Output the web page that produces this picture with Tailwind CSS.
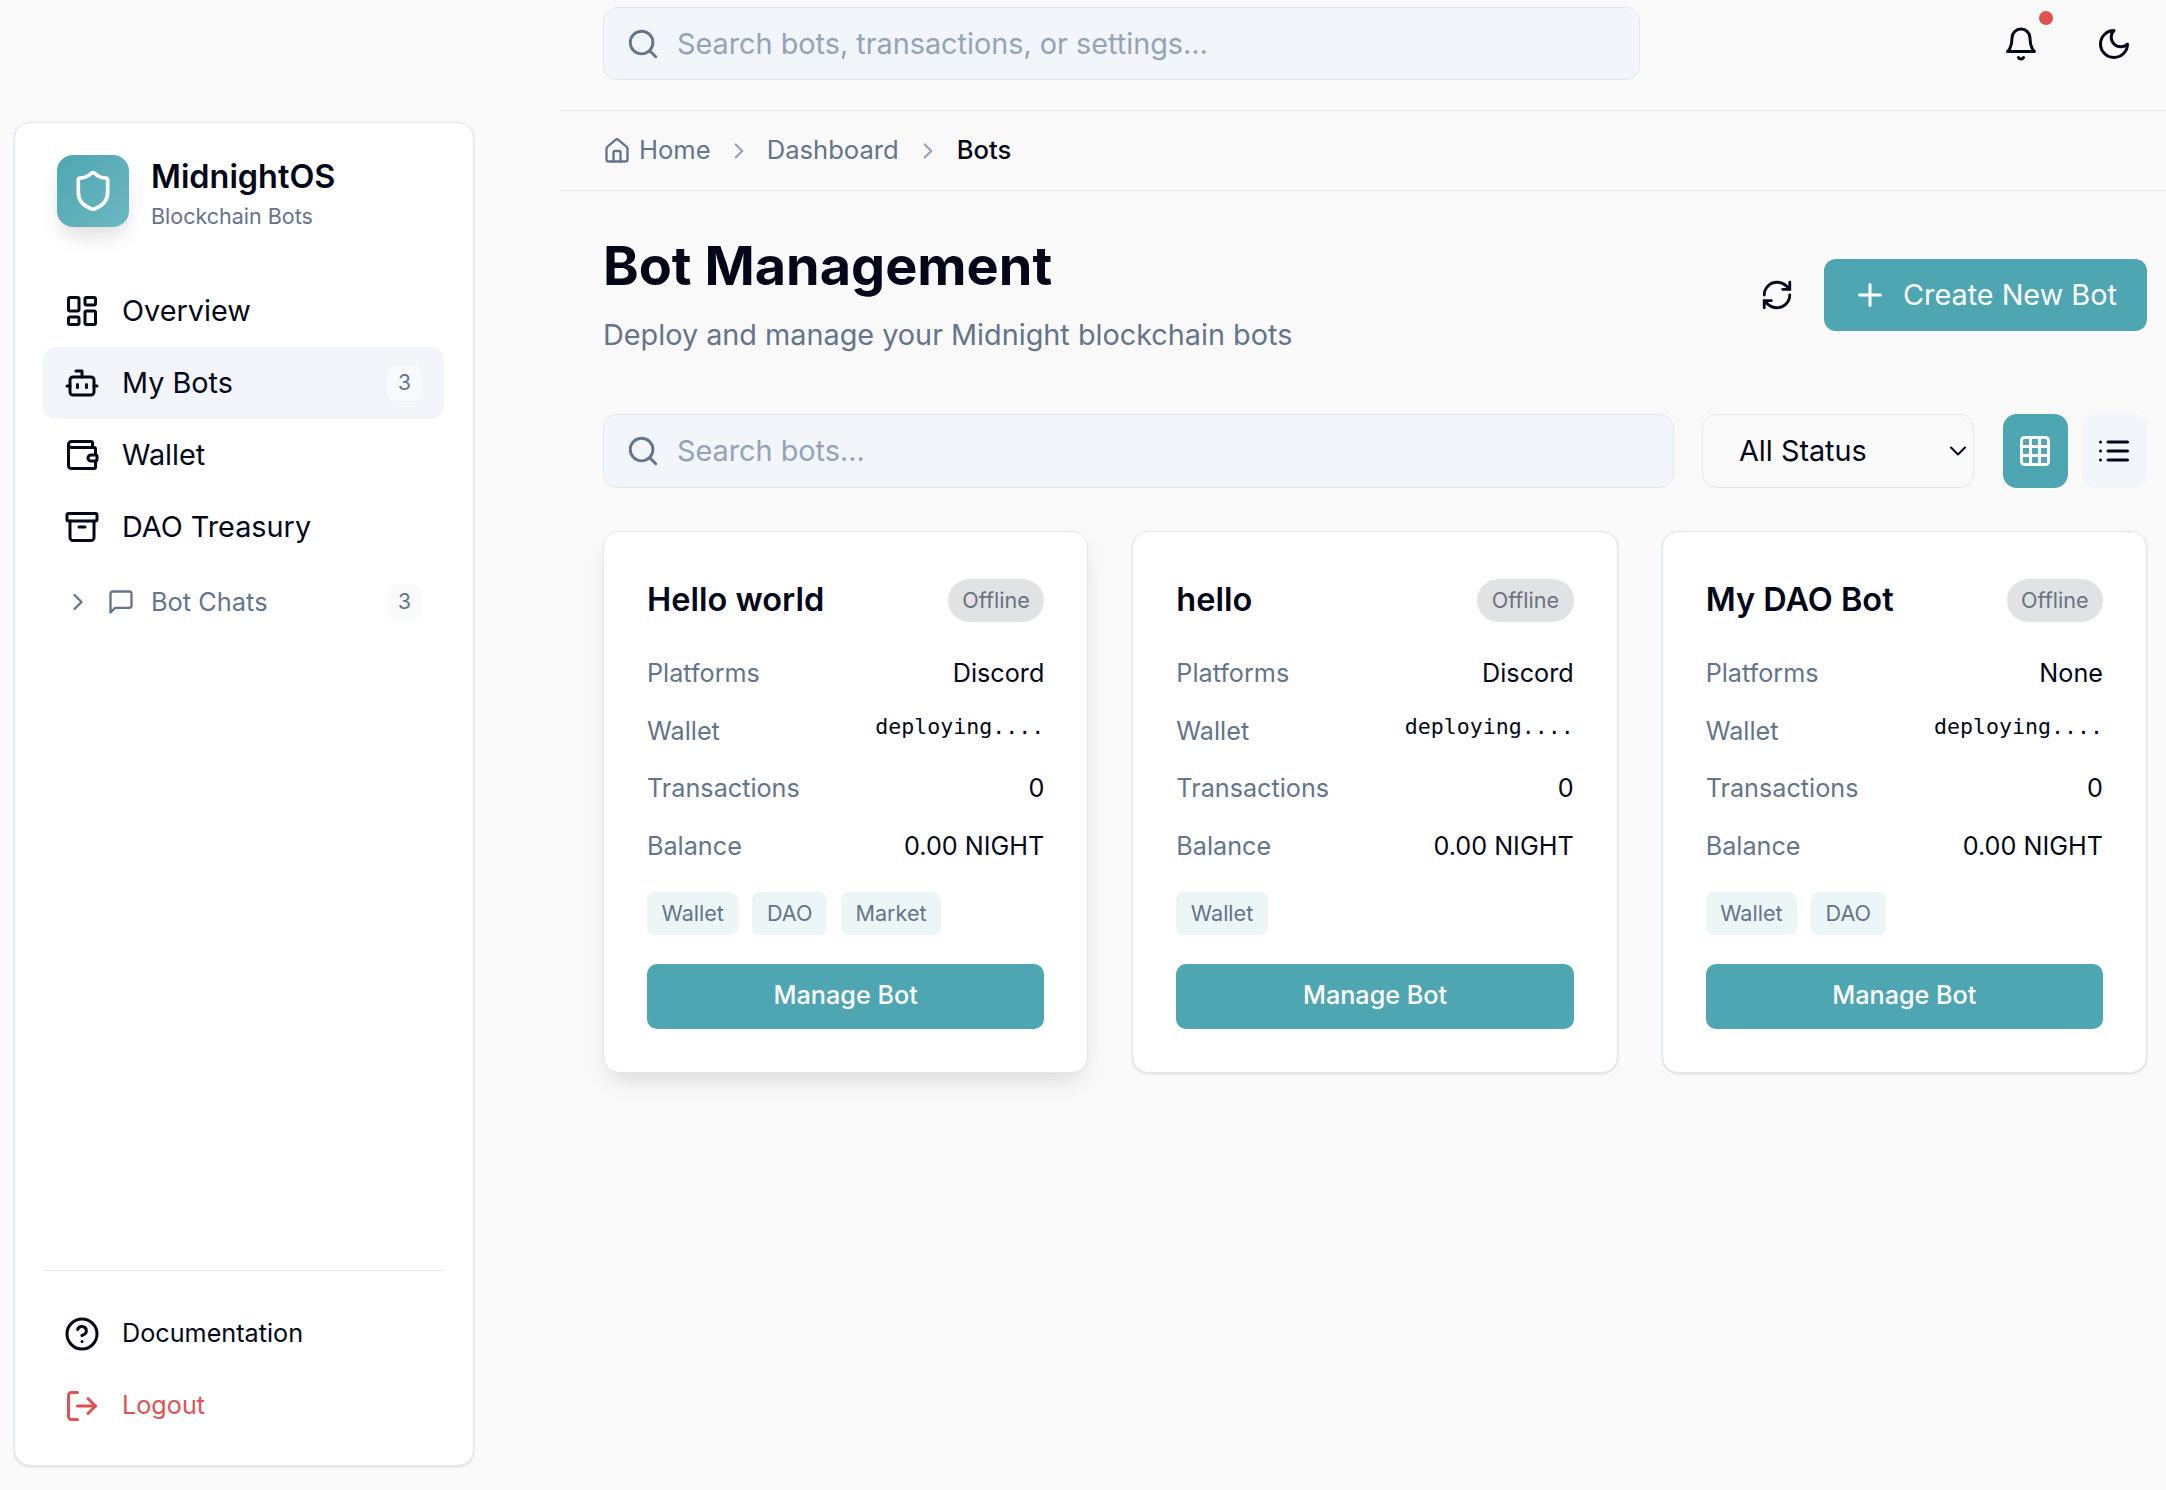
<!DOCTYPE html>
<html>
<head>
<title>MidnightOS - Bots</title>
<meta charset="utf-8">
<script src="https://cdn.jsdelivr.net/npm/@tailwindcss/browser@4"></script>
</head>
<body class="bg-[#fafafa] text-[#020817] font-['Inter',sans-serif] antialiased">
<div class="flex w-[2166px] h-[1490px] overflow-hidden">

  <!-- Sidebar -->
  <div class="w-[560px] shrink-0 pl-[14px] pt-[122px] pb-[24px]">
    <aside class="w-[460px] h-full bg-white border border-[#e2e8f0] rounded-[16px] shadow-sm flex flex-col pt-[32px] pl-[28px] pr-[29px] pb-[23px]">
      <div class="flex items-center gap-[22px] pl-[14px]">
        <div class="w-[72px] h-[72px] rounded-[16px] bg-gradient-to-br from-[#4ea6b2] to-[#6cb8c0] flex items-center justify-center shadow-[0_12px_20px_-4px_rgba(0,0,0,0.14)]">
          <svg class="w-[44px] h-[44px]" viewBox="0 0 24 24" fill="none" stroke="white" stroke-width="2" stroke-linecap="round" stroke-linejoin="round"><path d="M20 13c0 5-3.5 7.5-7.66 8.95a1 1 0 0 1-.67-.01C7.5 20.5 4 18 4 13V6a1 1 0 0 1 1-1c2 0 4.5-1.2 6.24-2.72a1.17 1.17 0 0 1 1.52 0C14.51 3.81 17 5 19 5a1 1 0 0 1 1 1z"/></svg>
        </div>
        <div class="h-[72px] pt-[1px]">
          <div class="text-[32.4px] leading-[42px] font-semibold">MidnightOS</div>
          <div class="text-[21.5px] leading-[30px] mt-[3px] text-[#64748b]">Blockchain Bots</div>
        </div>
      </div>

      <nav class="mt-[48px] flex flex-col">
        <a class="h-[72px] flex items-center gap-[22px] px-[21px] rounded-[14px] text-[28.8px]">
          <svg class="w-[36px] h-[36px]" viewBox="0 0 24 24" fill="none" stroke="currentColor" stroke-width="2" stroke-linecap="round" stroke-linejoin="round"><rect width="7" height="9" x="3" y="3" rx="1"/><rect width="7" height="5" x="14" y="3" rx="1"/><rect width="7" height="9" x="14" y="12" rx="1"/><rect width="7" height="5" x="3" y="16" rx="1"/></svg>
          Overview
        </a>
        <a class="h-[72px] flex items-center gap-[22px] pl-[21px] pr-[22px] rounded-[14px] bg-[#f2f5fa] text-[28.8px]">
          <svg class="w-[36px] h-[36px]" viewBox="0 0 24 24" fill="none" stroke="currentColor" stroke-width="2" stroke-linecap="round" stroke-linejoin="round"><path d="M12 8V4H8"/><rect width="16" height="12" x="4" y="8" rx="2"/><path d="M2 14h2"/><path d="M20 14h2"/><path d="M15 13v2"/><path d="M9 13v2"/></svg>
          My Bots
          <span class="ml-auto w-[35px] h-[35px] rounded-[8px] bg-[#f8fafc] text-[#64748b] text-[21px] flex items-center justify-center">3</span>
        </a>
        <a class="h-[72px] flex items-center gap-[22px] px-[21px] rounded-[14px] text-[28.8px]">
          <svg class="w-[36px] h-[36px]" viewBox="0 0 24 24" fill="none" stroke="currentColor" stroke-width="2" stroke-linecap="round" stroke-linejoin="round"><path d="M19 7V4a1 1 0 0 0-1-1H5a2 2 0 0 0 0 4h15a1 1 0 0 1 1 1v4h-3a2 2 0 0 0 0 4h3a1 1 0 0 0 1-1v-2a1 1 0 0 0-1-1"/><path d="M3 5v14a2 2 0 0 0 2 2h15a1 1 0 0 0 1-1v-4"/></svg>
          Wallet
        </a>
        <a class="h-[72px] flex items-center gap-[22px] px-[21px] rounded-[14px] text-[28.8px]">
          <svg class="w-[36px] h-[36px]" viewBox="0 0 24 24" fill="none" stroke="currentColor" stroke-width="2" stroke-linecap="round" stroke-linejoin="round"><rect width="20" height="5" x="2" y="3" rx="1"/><path d="M4 8v11a2 2 0 0 0 2 2h12a2 2 0 0 0 2-2V8"/><path d="M10 12h4"/></svg>
          DAO Treasury
        </a>
        <a class="h-[60px] mt-[9px] flex items-center pl-[21px] pr-[22px] text-[25.4px] text-[#64748b]">
          <svg class="w-[28px] h-[28px]" viewBox="0 0 24 24" fill="none" stroke="currentColor" stroke-width="2" stroke-linecap="round" stroke-linejoin="round"><path d="m9 18 6-6-6-6"/></svg>
          <svg class="w-[28px] h-[28px] ml-[15px]" viewBox="0 0 24 24" fill="none" stroke="currentColor" stroke-width="2" stroke-linecap="round" stroke-linejoin="round"><path d="M21 15a2 2 0 0 1-2 2H7l-4 4V5a2 2 0 0 1 2-2h14a2 2 0 0 1 2 2z"/></svg>
          <span class="ml-[16px]">Bot Chats</span>
          <span class="ml-auto w-[35px] h-[35px] rounded-[8px] bg-[#f8fafc] text-[21px] flex items-center justify-center">3</span>
        </a>
      </nav>

      <div class="mt-auto border-t border-[#e2e8f0] pt-[27px] flex flex-col">
        <a class="h-[72px] flex items-center gap-[22px] px-[21px] text-[25.2px]">
          <svg class="w-[36px] h-[36px]" viewBox="0 0 24 24" fill="none" stroke="currentColor" stroke-width="2" stroke-linecap="round" stroke-linejoin="round"><circle cx="12" cy="12" r="10"/><path d="M9.09 9a3 3 0 0 1 5.83 1c0 2-3 3-3 3"/><path d="M12 17h.01"/></svg>
          Documentation
        </a>
        <a class="h-[72px] flex items-center gap-[22px] px-[21px] text-[25.2px] text-[#e05252]">
          <svg class="w-[36px] h-[36px]" viewBox="0 0 24 24" fill="none" stroke="currentColor" stroke-width="2" stroke-linecap="round" stroke-linejoin="round"><path d="m16 17 5-5-5-5"/><path d="M21 12H9"/><path d="M9 21H5a2 2 0 0 1-2-2V5a2 2 0 0 1 2-2h4"/></svg>
          Logout
        </a>
      </div>
    </aside>
  </div>

  <!-- Main -->
  <main class="flex-1 min-w-0">
    <header class="h-[111px] border-b border-[#e2e8f0] flex items-start pt-[7px] pl-[43px]">
      <div class="w-[1037px] h-[73px] rounded-[14px] border border-[#e2e8f0] bg-[#f2f5fa] flex items-center pl-[22px] gap-[17px]">
        <svg class="w-[34px] h-[34px] text-[#64748b] shrink-0" viewBox="0 0 24 24" fill="none" stroke="currentColor" stroke-width="2" stroke-linecap="round" stroke-linejoin="round"><circle cx="11" cy="11" r="8"/><path d="m21 21-4.3-4.3"/></svg>
        <input class="flex-1 bg-transparent outline-none text-[28.8px] placeholder:text-[#94a3b8]" placeholder="Search bots, transactions, or settings...">
      </div>
      <div class="relative ml-[363px] mt-[19px] w-[36px] h-[36px]">
        <svg class="w-[36px] h-[36px]" viewBox="0 0 24 24" fill="none" stroke="currentColor" stroke-width="2" stroke-linecap="round" stroke-linejoin="round"><path d="M6 8a6 6 0 0 1 12 0c0 7 3 9 3 9H3s3-2 3-9"/><path d="M10.3 21a1.94 1.94 0 0 0 3.4 0"/></svg>
        <span class="absolute left-[36px] top-[-15px] w-[14px] h-[14px] rounded-full bg-[#e05252]"></span>
      </div>
      <svg class="ml-[57px] mt-[19px] w-[36px] h-[36px]" viewBox="0 0 24 24" fill="none" stroke="currentColor" stroke-width="2" stroke-linecap="round" stroke-linejoin="round"><path d="M12 3a6 6 0 0 0 9 9 9 9 0 1 1-9-9Z"/></svg>
    </header>

    <div class="h-[80px] border-b border-[#e2e8f0] flex items-center pl-[43px] text-[25.6px] text-[#64748b]">
      <svg class="w-[28px] h-[28px]" viewBox="0 0 24 24" fill="none" stroke="currentColor" stroke-width="2" stroke-linecap="round" stroke-linejoin="round"><path d="M15 21v-8a1 1 0 0 0-1-1h-4a1 1 0 0 0-1 1v8"/><path d="M3 10a2 2 0 0 1 .709-1.528l7-5.999a2 2 0 0 1 2.582 0l7 5.999A2 2 0 0 1 21 10v9a2 2 0 0 1-2 2H5a2 2 0 0 1-2-2z"/></svg>
      <span class="ml-[8px]">Home</span>
      <svg class="w-[26px] h-[26px] mx-[15px] text-[#94a3b8]" viewBox="0 0 24 24" fill="none" stroke="currentColor" stroke-width="2" stroke-linecap="round" stroke-linejoin="round"><path d="m9 18 6-6-6-6"/></svg>
      <span>Dashboard</span>
      <svg class="w-[26px] h-[26px] mx-[16px] text-[#94a3b8]" viewBox="0 0 24 24" fill="none" stroke="currentColor" stroke-width="2" stroke-linecap="round" stroke-linejoin="round"><path d="m9 18 6-6-6-6"/></svg>
      <span class="text-[#020817] font-medium">Bots</span>
    </div>

    <div class="pl-[43px] pr-[19px]">
      <div class="flex items-start justify-between pt-[39px] h-[223px]">
        <div>
          <h1 class="text-[54px] leading-[72px] font-bold">Bot Management</h1>
          <p class="text-[28.8px] leading-[40px] text-[#64748b] mt-[13px]">Deploy and manage your Midnight blockchain bots</p>
        </div>
        <div class="flex items-center mt-[29px]">
          <svg class="w-[34px] h-[34px]" viewBox="0 0 24 24" fill="none" stroke="currentColor" stroke-width="2" stroke-linecap="round" stroke-linejoin="round"><path d="M3 12a9 9 0 0 1 9-9 9.75 9.75 0 0 1 6.74 2.74L21 8"/><path d="M21 3v5h-5"/><path d="M21 12a9 9 0 0 1-9 9 9.75 9.75 0 0 1-6.74-2.74L3 16"/><path d="M8 16H3v5"/></svg>
          <button class="ml-[30px] w-[323px] h-[72px] rounded-[12px] bg-[#4ea6b2] text-white text-[28.8px] flex items-center pl-[28px] gap-[15px]">
            <svg class="w-[36px] h-[36px]" viewBox="0 0 24 24" fill="none" stroke="currentColor" stroke-width="2" stroke-linecap="round" stroke-linejoin="round"><path d="M5 12h14"/><path d="M12 5v14"/></svg>
            Create New Bot
          </button>
        </div>
      </div>

      <div class="flex items-center">
        <div class="w-[1071px] h-[74px] rounded-[14px] border border-[#e2e8f0] bg-[#f2f5fa] flex items-center pl-[22px] gap-[17px]">
          <svg class="w-[34px] h-[34px] text-[#64748b] shrink-0" viewBox="0 0 24 24" fill="none" stroke="currentColor" stroke-width="2" stroke-linecap="round" stroke-linejoin="round"><circle cx="11" cy="11" r="8"/><path d="m21 21-4.3-4.3"/></svg>
          <input class="flex-1 bg-transparent outline-none text-[28.8px] placeholder:text-[#94a3b8]" placeholder="Search bots...">
        </div>
        <div class="relative ml-[28px] w-[272px] h-[74px] rounded-[14px] border border-[#e2e8f0] bg-[#fafafa] flex items-center">
          <select class="appearance-none bg-transparent w-full h-full pl-[36px] text-[28.8px] outline-none">
            <option>All Status</option>
          </select>
          <svg class="absolute right-[1px] top-[22px] w-[28px] h-[28px] pointer-events-none" viewBox="0 0 24 24" fill="none" stroke="currentColor" stroke-width="1.7" stroke-linecap="round" stroke-linejoin="round"><path d="m6 9 6 6 6-6"/></svg>
        </div>
        <div class="ml-[29px] w-[65px] h-[74px] rounded-[14px] bg-[#4ea6b2] text-white flex items-center justify-center">
          <svg class="w-[36px] h-[36px] -ml-[1px]" viewBox="0 0 24 24" fill="none" stroke="currentColor" stroke-width="2" stroke-linecap="round" stroke-linejoin="round"><rect width="18" height="18" x="3" y="3" rx="2"/><path d="M3 9h18"/><path d="M3 15h18"/><path d="M9 3v18"/><path d="M15 3v18"/></svg>
        </div>
        <div class="ml-[14px] w-[65px] h-[74px] rounded-[14px] bg-[#f2f5fa] flex items-center justify-center">
          <svg class="w-[36px] h-[36px] -ml-[1px]" viewBox="0 0 24 24" fill="none" stroke="currentColor" stroke-width="2" stroke-linecap="round" stroke-linejoin="round"><path d="M3 12h.01"/><path d="M3 18h.01"/><path d="M3 6h.01"/><path d="M8 12h13"/><path d="M8 18h13"/><path d="M8 6h13"/></svg>
        </div>
      </div>

      <div class="grid grid-cols-3 gap-[44px] mt-[43px]">
        <!-- Card 1 -->
        <div class="h-[542px] bg-white border border-[#e2e8f0] rounded-[16px] pt-[47px] px-[43px] shadow-[0_12px_24px_-6px_rgba(0,0,0,0.14)]">
          <div class="flex items-center justify-between h-[43px]">
            <h3 class="text-[32.5px] font-semibold">Hello world</h3>
            <span class="h-[43px] px-[14.5px] rounded-full bg-[#e1e2e4] text-[#6b7280] text-[21.6px] flex items-center">Offline</span>
          </div>
          <div class="mt-[23px] text-[25.2px]">
            <div class="h-[57.7px] flex items-center justify-between"><span class="text-[#64748b]">Platforms</span><span>Discord</span></div>
            <div class="h-[57.7px] flex items-center justify-between"><span class="text-[#64748b]">Wallet</span><span class="font-['DejaVu_Sans_Mono',monospace] text-[21.6px] mb-[8px]">deploying....</span></div>
            <div class="h-[57.7px] flex items-center justify-between"><span class="text-[#64748b]">Transactions</span><span>0</span></div>
            <div class="h-[57.7px] flex items-center justify-between"><span class="text-[#64748b]">Balance</span><span>0.00 NIGHT</span></div>
          </div>
          <div class="flex gap-[14px] mt-[16px] text-[21.6px] text-[#64748b]">
            <span class="h-[43px] px-[14.5px] rounded-[8px] bg-[#edf6f7] flex items-center">Wallet</span>
            <span class="h-[43px] px-[14.5px] rounded-[8px] bg-[#edf6f7] flex items-center">DAO</span>
            <span class="h-[43px] px-[14.5px] rounded-[8px] bg-[#edf6f7] flex items-center">Market</span>
          </div>
          <button class="mt-[29px] w-full h-[65px] rounded-[10px] bg-[#4ea6b2] text-white text-[25.2px] font-medium">Manage Bot</button>
        </div>
        <!-- Card 2 -->
        <div class="h-[542px] bg-white border border-[#e2e8f0] rounded-[16px] pt-[47px] px-[43px] shadow-sm">
          <div class="flex items-center justify-between h-[43px]">
            <h3 class="text-[32.5px] font-semibold">hello</h3>
            <span class="h-[43px] px-[14.5px] rounded-full bg-[#e1e2e4] text-[#6b7280] text-[21.6px] flex items-center">Offline</span>
          </div>
          <div class="mt-[23px] text-[25.2px]">
            <div class="h-[57.7px] flex items-center justify-between"><span class="text-[#64748b]">Platforms</span><span>Discord</span></div>
            <div class="h-[57.7px] flex items-center justify-between"><span class="text-[#64748b]">Wallet</span><span class="font-['DejaVu_Sans_Mono',monospace] text-[21.6px] mb-[8px]">deploying....</span></div>
            <div class="h-[57.7px] flex items-center justify-between"><span class="text-[#64748b]">Transactions</span><span>0</span></div>
            <div class="h-[57.7px] flex items-center justify-between"><span class="text-[#64748b]">Balance</span><span>0.00 NIGHT</span></div>
          </div>
          <div class="flex gap-[14px] mt-[16px] text-[21.6px] text-[#64748b]">
            <span class="h-[43px] px-[14.5px] rounded-[8px] bg-[#edf6f7] flex items-center">Wallet</span>
          </div>
          <button class="mt-[29px] w-full h-[65px] rounded-[10px] bg-[#4ea6b2] text-white text-[25.2px] font-medium">Manage Bot</button>
        </div>
        <!-- Card 3 -->
        <div class="h-[542px] bg-white border border-[#e2e8f0] rounded-[16px] pt-[47px] px-[43px] shadow-sm">
          <div class="flex items-center justify-between h-[43px]">
            <h3 class="text-[32.5px] font-semibold">My DAO Bot</h3>
            <span class="h-[43px] px-[14.5px] rounded-full bg-[#e1e2e4] text-[#6b7280] text-[21.6px] flex items-center">Offline</span>
          </div>
          <div class="mt-[23px] text-[25.2px]">
            <div class="h-[57.7px] flex items-center justify-between"><span class="text-[#64748b]">Platforms</span><span>None</span></div>
            <div class="h-[57.7px] flex items-center justify-between"><span class="text-[#64748b]">Wallet</span><span class="font-['DejaVu_Sans_Mono',monospace] text-[21.6px] mb-[8px]">deploying....</span></div>
            <div class="h-[57.7px] flex items-center justify-between"><span class="text-[#64748b]">Transactions</span><span>0</span></div>
            <div class="h-[57.7px] flex items-center justify-between"><span class="text-[#64748b]">Balance</span><span>0.00 NIGHT</span></div>
          </div>
          <div class="flex gap-[14px] mt-[16px] text-[21.6px] text-[#64748b]">
            <span class="h-[43px] px-[14.5px] rounded-[8px] bg-[#edf6f7] flex items-center">Wallet</span>
            <span class="h-[43px] px-[14.5px] rounded-[8px] bg-[#edf6f7] flex items-center">DAO</span>
          </div>
          <button class="mt-[29px] w-full h-[65px] rounded-[10px] bg-[#4ea6b2] text-white text-[25.2px] font-medium">Manage Bot</button>
        </div>
      </div>
    </div>
  </main>
</div>
</body>
</html>
